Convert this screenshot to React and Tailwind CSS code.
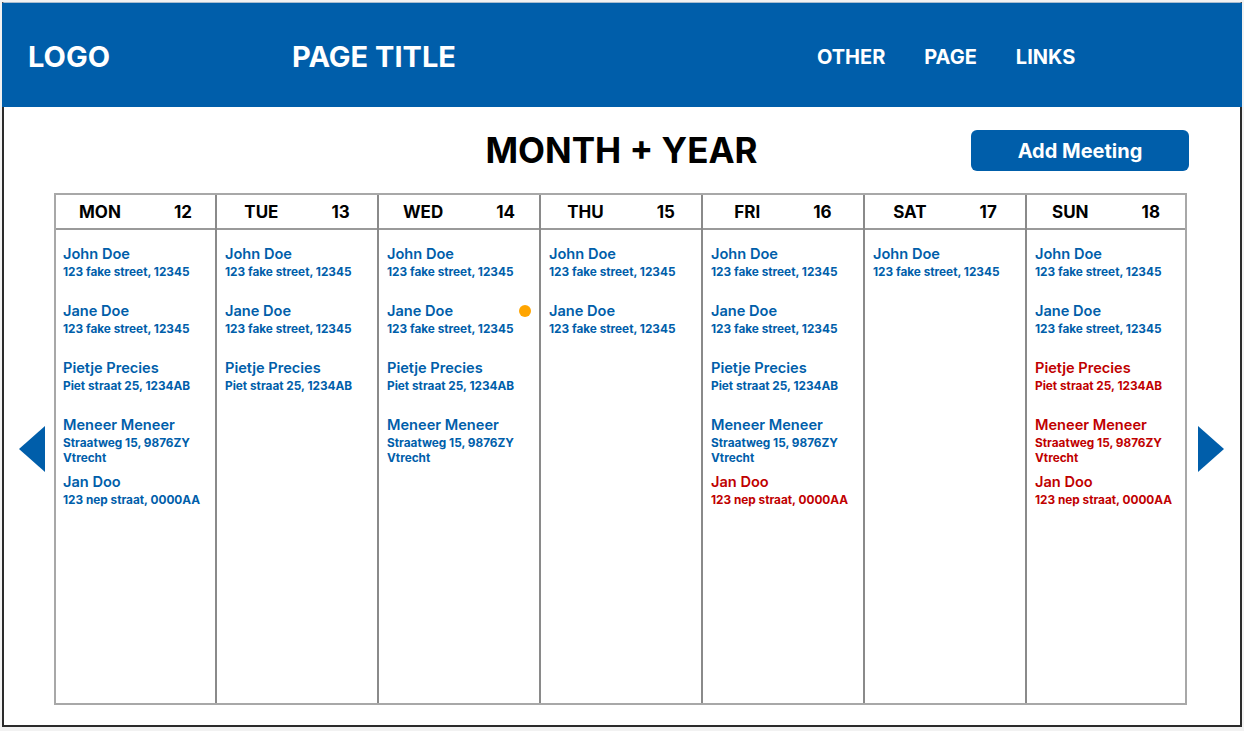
const BLUE = 'text-[#005eaa]'
const RED = 'text-[#c00000]'

const fake = { name: 'John Doe', addr: '123 fake street, 12345' }
const jane = { name: 'Jane Doe', addr: '123 fake street, 12345' }
const piet = { name: 'Pietje Precies', addr: 'Piet straat 25, 1234AB' }
const meneer = { name: 'Meneer Meneer', addr: 'Straatweg 15, 9876ZY Vtrecht' }
const jan = { name: 'Jan Doo', addr: '123 nep straat, 0000AA' }

const days = [
  { day: 'MON', date: 12, items: [fake, jane, piet, meneer, jan] },
  { day: 'TUE', date: 13, items: [fake, jane, piet] },
  { day: 'WED', date: 14, items: [fake, { ...jane, dot: true }, piet, meneer] },
  { day: 'THU', date: 15, items: [fake, jane] },
  { day: 'FRI', date: 16, items: [fake, jane, piet, meneer, { ...jan, red: true }] },
  { day: 'SAT', date: 17, items: [fake] },
  { day: 'SUN', date: 18, items: [fake, jane, { ...piet, red: true }, { ...meneer, red: true }, { ...jan, red: true }] },
]

function Arrow({ dir }) {
  return (
    <svg width="26" height="46" viewBox="0 0 26 46" className="shrink-0">
      {dir === 'left'
        ? <polygon points="26,0 26,46 0,23" fill="#005eaa" />
        : <polygon points="0,0 0,46 26,23" fill="#005eaa" />}
    </svg>
  )
}

function Entry({ item }) {
  const color = item.red ? RED : BLUE
  return (
    <div className={`relative h-[57px] ${color}`}>
      <div className="text-[14.6px] leading-[18px] font-semibold">{item.name}</div>
      <div className="mt-[2px] text-[11.8px] leading-[15px] font-bold">{item.addr}</div>
      {item.dot && <div className="absolute right-[8px] top-[3px] h-3 w-3 rounded-full bg-[#ffa500]" />}
    </div>
  )
}

export default function App() {
  return (
    <div className="w-[1244px] h-[731px] bg-[#f2f2f2] pt-[2px] pl-[2px]" style={{ fontFamily: 'Inter, "Liberation Sans", sans-serif' }}>
      <div className="w-[1240px] h-[725px] bg-white border-l-2 border-r-2 border-b-2 border-t border-t-[#aabdd0] border-x-[#2b2b2b] border-b-[#2b2b2b] flex flex-col">
        {/* header */}
        <header className="-mx-[2px] h-[104px] shrink-0 bg-[#005eaa] text-white flex items-center pt-[4px] pl-[26px] font-bold">
          <div className="text-[29px] w-[264px]">LOGO</div>
          <div className="text-[29px]">PAGE TITLE</div>
          <nav className="ml-[361px] flex gap-[39px] text-[20px]">
            <span>OTHER</span>
            <span>PAGE</span>
            <span>LINKS</span>
          </nav>
        </header>

        {/* title row */}
        <div className="ml-[50px] w-[1135px] mt-[23px] h-[41px] grid grid-cols-[1fr_auto_1fr] items-center">
          <div />
          <h1 className="text-[35px] font-bold text-black leading-none">MONTH + YEAR</h1>
          <button className="justify-self-end w-[218px] h-[41px] rounded-md bg-[#005eaa] text-white text-[20px] font-bold">Add Meeting</button>
        </div>

        {/* calendar */}
        <div className="mt-[22px] flex items-center pl-[15px]">
          <Arrow dir="left" />
          <div className="ml-[9px] w-[1133px] h-[512px] border-2 border-[#a8a8a8] grid grid-cols-[161px_repeat(5,162px)_1fr]">
            {days.map((d, i) => (
              <div key={d.day} className={`flex flex-col ${i < 6 ? 'border-r-2 border-[#8a8a8a]' : ''}`}>
                <div className="h-[35px] pt-[2px] border-b-2 border-[#9a9a9a] flex items-center justify-center gap-[53px] text-[17px] font-bold text-black">
                  <span>{d.day}</span>
                  <span>{d.date}</span>
                </div>
                <div className={`pt-[15px] ${i === 0 ? 'pl-[7px]' : 'pl-[8px]'}`}>
                  {d.items.map((it, j) => <Entry key={j} item={it} />)}
                </div>
              </div>
            ))}
          </div>
          <div className="ml-[11px]"><Arrow dir="right" /></div>
        </div>
      </div>
    </div>
  )
}
